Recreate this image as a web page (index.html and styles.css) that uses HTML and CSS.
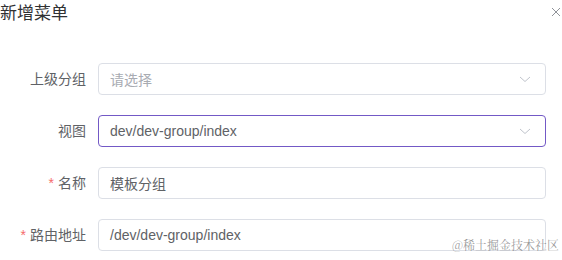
FILE: index.html
```html
<!DOCTYPE html>
<html>
<head>
  <title>新增菜单</title>
  <link rel="stylesheet" href="styles.css">
</head>
<body>
  <div class="dialog">
    <div class="dialog-header">
      <span class="dialog-title">新增菜单</span>
      <span class="dialog-close">
        <svg width="10" height="10" viewBox="0 0 10 10"><path d="M1 1L9 9M9 1L1 9" stroke="#909399" stroke-width="1" fill="none"/></svg>
      </span>
    </div>

    <form class="menu-form">
      <div class="form-item">
        <label class="form-label">上级分组</label>
        <div class="select">
          <span class="placeholder">请选择</span>
          <svg class="arrow" width="14" height="14" viewBox="0 0 14 14"><path d="M2 5L7 9.5L12 5" stroke="#c0c4cc" stroke-width="1" fill="none"/></svg>
        </div>
      </div>

      <div class="form-item">
        <label class="form-label">视图</label>
        <div class="select is-focus">
          <span class="value">dev/dev-group/index</span>
          <svg class="arrow" width="14" height="14" viewBox="0 0 14 14"><path d="M2 5L7 9.5L12 5" stroke="#c0c4cc" stroke-width="1" fill="none"/></svg>
        </div>
      </div>

      <div class="form-item">
        <label class="form-label is-required">名称</label>
        <div class="input"><span class="value">模板分组</span></div>
      </div>

      <div class="form-item">
        <label class="form-label is-required">路由地址</label>
        <div class="input"><span class="value">/dev/dev-group/index</span></div>
      </div>
    </form>
  </div>

  <div class="watermark">@稀土掘金技术社区</div>
</body>
</html>
```

FILE: styles.css
```css
body {
  margin: 0;
  background-color: #fff;
  font-family: "Liberation Sans", Arial, "Noto Sans CJK SC", sans-serif;
  color: #606266;
  width: 562px;
  height: 260px;
  overflow: hidden;
  position: relative;
}

.dialog-header {
  display: flex;
  justify-content: space-between;
  height: 30px;
}

.dialog-title {
  font-size: 17px;
  line-height: 30px;
  color: #303133;
  margin-top: -1px;
}

.dialog-close {
  padding: 3px 1px 0 0;
}

.menu-form {
  margin-top: 33px;
}

.form-item {
  display: flex;
  margin-bottom: 20px;
}

.form-label {
  width: 98px;
  box-sizing: border-box;
  padding-right: 12px;
  text-align: right;
  font-size: 14px;
  line-height: 32px;
  color: #606266;
}

.form-label.is-required::before {
  content: "*";
  color: #f56c6c;
  margin-right: 4px;
}

.select,
.input {
  width: 448px;
  height: 32px;
  box-sizing: border-box;
  border: 1px solid #dcdfe6;
  border-radius: 4px;
  padding: 0 13px 0 11px;
  display: flex;
  align-items: center;
  justify-content: space-between;
  font-size: 14px;
}

.select.is-focus {
  border-color: #7359c6;
}

.placeholder {
  color: #a8abb2;
}

.value {
  color: #606266;
}

.watermark {
  position: absolute;
  right: 3px;
  bottom: 7px;
  font-family: "Noto Serif CJK SC", "Noto Sans CJK SC", serif;
  font-size: 12px;
  color: rgba(120, 120, 120, 0.75);
}
```
